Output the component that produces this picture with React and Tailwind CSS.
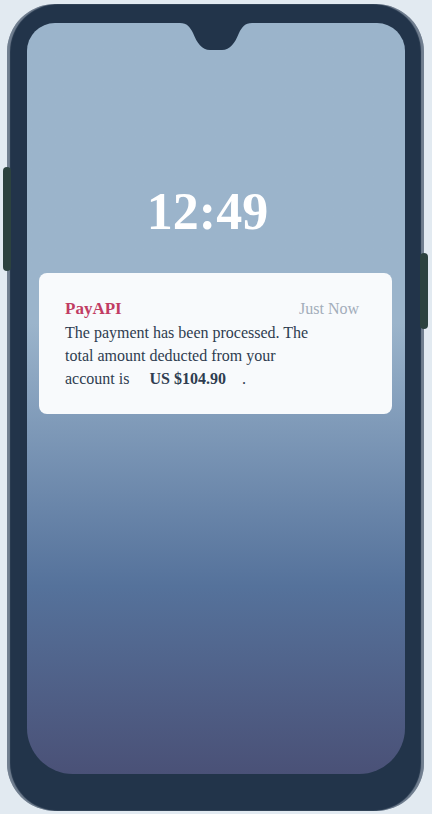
const Notch = () => (
    <svg width="72" height="28" viewBox="0 0 72 28" className="block">
        <path
            d="M0 0 H72 C65 0 62 4 59 10 C55 20 50 27 42 27 H30 C22 27 17 20 13 10 C10 4 7 0 0 0 Z"
            fill="#22344a"
        />
    </svg>
);

const App = () => {
    return (
        <div
            className="w-full h-[814px] bg-[#e2eaf1] flex items-center justify-center"
            style={{ fontFamily: '"Liberation Serif", "Times New Roman", serif' }}
        >
            {/* phone body */}
            <div className="relative w-[417px] h-[807px] mr-px bg-[#22344a] rounded-[48px] pt-[19px] pl-[20px] pr-[19px] pb-[37px] shadow-[inset_3px_0_1px_rgba(210,220,230,0.45),inset_-3px_0_1px_rgba(210,220,230,0.45)]">
                {/* side buttons */}
                <div className="absolute left-[-4px] top-[163px] w-[8px] h-[104px] rounded-full bg-[#2c423f]" />
                <div className="absolute right-[-4px] top-[249px] w-[8px] h-[76px] rounded-full bg-[#2c423f]" />

                {/* screen */}
                <div className="relative h-full rounded-t-[28px] rounded-b-[46px] bg-gradient-to-b from-[#9bb4cb] from-40% via-[#55729b] via-75% to-[#4a5177] pl-[12px] pr-[13px]">
                    <div className="absolute top-0 left-1/2 -translate-x-1/2">
                        <Notch />
                    </div>

                    <div className="pt-[163px] flex justify-center pr-4">
                        <span className="text-white font-bold text-[52px] leading-none">12:49</span>
                    </div>

                    {/* notification */}
                    <div className="mt-[35px] bg-[#f8fafc] rounded-[8px] pl-[26px] pr-[33px] pt-6 pb-6">
                        <div className="flex justify-between items-center leading-6">
                            <span className="text-[#c13c63] font-bold text-[17px]">PayAPI</span>
                            <span className="text-[#a3adba] text-[16px]">Just Now</span>
                        </div>
                        <p className="w-[260px] text-[16px] leading-[23px] text-[#2f3d50]">
                            The payment has been processed. The total amount deducted from your account is{" "}
                            <span className="mx-4 font-bold">US $104.90</span>.
                        </p>
                    </div>
                </div>
            </div>
        </div>
    );
};

export default App;
